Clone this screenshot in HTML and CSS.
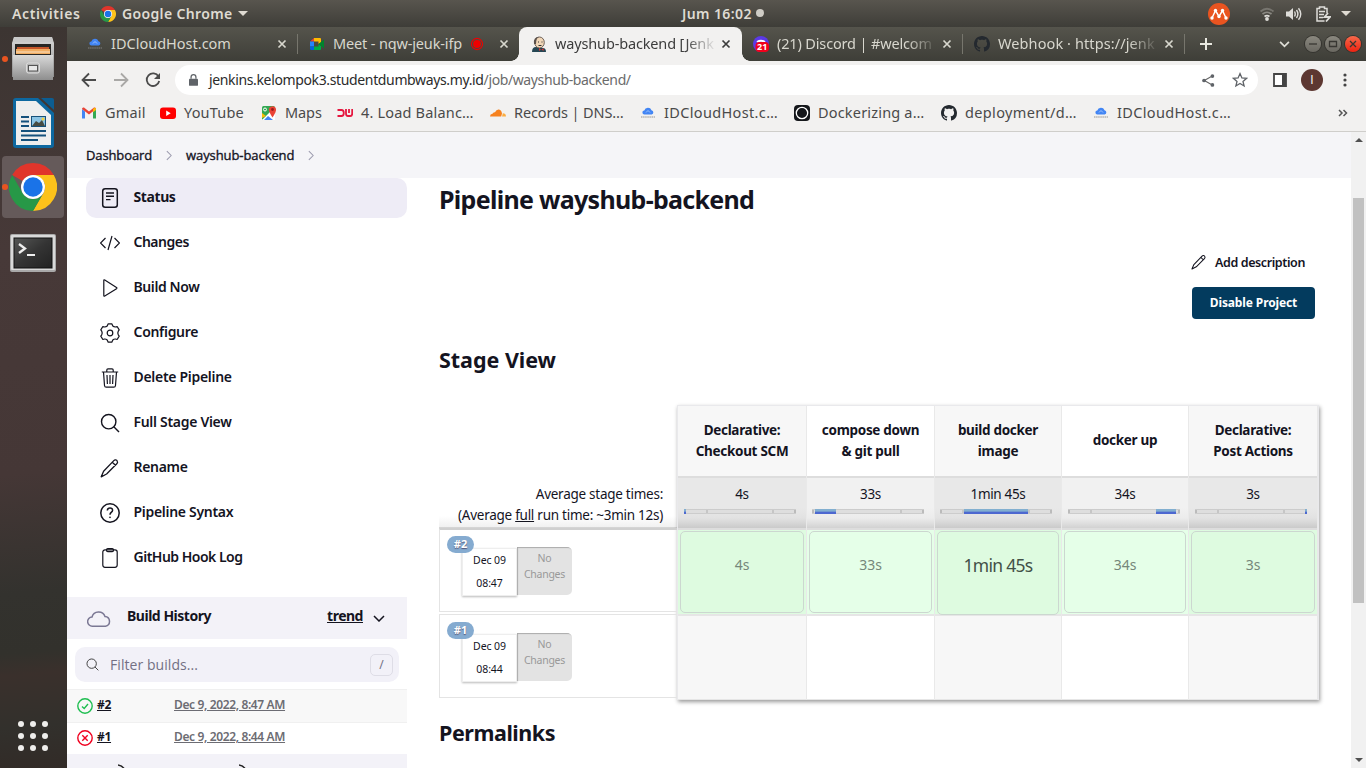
FILE: index.html
```html
<!DOCTYPE html>
<html lang="en">
<head>
<meta charset="utf-8">
<title>wayshub-backend [Jenkins]</title>
<link rel="stylesheet" href="styles.css">
</head>
<body>
<svg width="0" height="0" class="defs" aria-hidden="true">
  <symbol id="chrome" viewBox="0 0 48 48">
    <path fill="#e0352b" d="M24 0A24 24 0 0 1 44.8 12H24A12 12 0 0 0 13.6 18L3.2 12A24 24 0 0 1 24 0z"/>
    <path fill="#fcc21b" d="M44.8 12A24 24 0 0 1 24 48L34.4 30A12 12 0 0 0 34.4 18L24 12z"/>
    <path fill="#279847" d="M3.2 12A24 24 0 0 0 24 48L34.4 30A12 12 0 0 1 13.6 30z"/>
    <circle cx="24" cy="24" r="12" fill="#fff"/><circle cx="24" cy="24" r="9.7" fill="#1a73e8"/>
  </symbol>
  <symbol id="x" viewBox="0 0 10 10"><path d="M1.5 1.5l7 7M8.5 1.5l-7 7" stroke="currentColor" stroke-width="1.7" fill="none"/></symbol>
  <symbol id="github" viewBox="0 0 16 16"><path d="M8 0C3.58 0 0 3.58 0 8c0 3.54 2.29 6.53 5.47 7.59.4.07.55-.17.55-.38 0-.19-.01-.82-.01-1.49-2.01.37-2.53-.49-2.69-.94-.09-.23-.48-.94-.82-1.13-.28-.15-.68-.52-.01-.53.63-.01 1.08.58 1.23.82.72 1.21 1.87.87 2.33.66.07-.52.28-.87.51-1.07-1.78-.2-3.64-.89-3.64-3.95 0-.87.31-1.59.82-2.15-.08-.2-.36-1.02.08-2.12 0 0 .67-.21 2.2.82.64-.18 1.32-.27 2-.27s1.36.09 2 .27c1.53-1.04 2.2-.82 2.2-.82.44 1.1.16 1.92.08 2.12.51.56.82 1.27.82 2.15 0 3.07-1.87 3.75-3.65 3.95.29.25.54.73.54 1.48 0 1.07-.01 1.93-.01 2.2 0 .21.15.46.55.38A8 8 0 0 0 16 8c0-4.42-3.58-8-8-8z"/></symbol>
  <symbol id="idcloud" viewBox="0 0 16 16"><path fill="#4285f4" d="M4.5 9.5a2 2 0 0 1-.2-4 3.8 3.8 0 0 1 7.200-.3 2.200 2.200 0 0 1 .2 4.300z"/><path d="M6 7.500l2-2 2 2" stroke="#9fc3fb" fill="none"/><path d="M1 12h14" stroke="#888" stroke-width="1.600" stroke-dasharray="1.500 .6" opacity=".6"/></symbol>
  <symbol id="pencil" viewBox="0 0 20 20"><path d="M13.800 2.600a2.150 2.150 0 0 1 3.500.6c.5 1 .2 1.900-.5 2.600L6.600 16 1.200 18.800 3.600 13.200zM12.300 4.200l3.400 3.300" fill="none" stroke="currentColor" stroke-width="1.300" stroke-linejoin="round"/></symbol>
  <symbol id="search" viewBox="0 0 20 20"><circle cx="8.700" cy="8.700" r="7.200" fill="none" stroke="currentColor" stroke-width="1.400"/><path d="M13.800 13.800L19 19" stroke="currentColor" stroke-width="1.400"/></symbol>
</svg>

<header class="panel">
  <span class="activities">Activities</span>
  <svg class="panel-chrome"><use href="#chrome"/></svg>
  <span class="app-name">Google Chrome</span>
  <i class="caret"></i>
  <div class="clock">Jum 16:02<i class="dot"></i></div>
  <div class="tray">
    <svg width="22" height="22" viewBox="0 0 22 22"><circle cx="11" cy="11" r="11" fill="#e95420"/><path d="M4 15l3.500-7.500 3.500 6 3.500-6L18 15" fill="none" stroke="#fff" stroke-width="1.500"/><g fill="#fff"><circle cx="4" cy="15" r="1.700"/><circle cx="7.500" cy="7.500" r="1.700"/><circle cx="11" cy="13.500" r="1.700"/><circle cx="14.500" cy="7.500" r="1.700"/><circle cx="18" cy="15" r="1.700"/></g></svg>
    <svg class="wifi" width="16" height="14" viewBox="0 0 16 14" fill="none" stroke-width="1.700"><path d="M1.500 4.500Q8-1 14.500 4.500" stroke="#77756f"/><path d="M3.500 7q4.500-3.500 9 0" stroke="#8b8983"/><path d="M5.500 9.500q2.500-1.800 5 0" stroke="#deddd9"/><circle cx="8" cy="12" r="1.900" fill="#deddd9"/></svg>
    <svg class="volume" width="16" height="14" viewBox="0 0 16 14"><path d="M0 4.500h3L7 1v12L3 9.500H0z" fill="#deddd9"/><path d="M8.500 4.500q1.500 2.500 0 5M10.500 3q2.800 4 0 8M12.500 1.200q4.500 5.800 0 11.600" fill="none" stroke="#deddd9" stroke-width="1.400"/></svg>
    <svg class="battery" width="15" height="16" viewBox="0 0 15 16" fill="none" stroke="#deddd9" stroke-width="1.500"><path d="M8.500 15H1V2.500h2.500V1h5v1.500H11V7M3 5.500h6M3 8.500h5M3 11.500h4"/><path d="M12 7l-3.500 4H14l-4 4.500" stroke-width="1.800"/></svg>
    <i class="caret tray-caret"></i>
  </div>
</header>

<div class="desktop">
  <nav class="dock">
    <div class="launcher running">
      <svg width="42" height="44" viewBox="0 0 42 44"><defs><linearGradient id="g1" x2="0" y2="1"><stop stop-color="#d9d9d9"/><stop offset="1" stop-color="#8e8e8e"/></linearGradient></defs><path d="M2 0h38l2 6v34H0V6z" fill="url(#g1)"/><path d="M2 0h38l1 5H1z" fill="#c9c9c9"/><path d="M3 7h36v11H3z" fill="#282624"/><path d="M5 10h32v7H5z" fill="#c5562a"/><path d="M4 12h34v5H4z" fill="#f1ac61"/><path d="M4 15h34" stroke="#f7e0c5"/><path d="M1 18h40v25H1z" fill="url(#g1)"/><rect x="14.500" y="26" width="13" height="10" rx="2" fill="#b3b3b3" stroke="#ddd"/><rect x="16.500" y="28.500" width="9" height="5.500" fill="#e8e8e8" stroke="#555"/></svg>
    </div>
    <div class="launcher writer">
      <svg width="41" height="50" viewBox="0 0 41 50"><path d="M3 0h22l16 15v32q0 3-3 3H3q-3 0-3-3V3q0-3 3-3z" fill="#0d68a0"/><path d="M28 0h11q2 0 2 2v10z" fill="#0c5d91"/><path d="M3 3h20l15 14v30H3z" fill="#eee"/><path d="M8 19h8M8 23.500h8M8 28h8M8 33h25M8 37.500h25M8 42h17" stroke="#15517c" stroke-width="2"/><rect x="18.500" y="18.500" width="14" height="10" fill="#8bc4e4" stroke="#17517a"/><path d="M19 28l4-5 3 2 3-3 3 6z" fill="#474c43"/><circle cx="30" cy="21" r="1.500" fill="#f4d03f"/></svg>
    </div>
    <div class="launcher running active"><svg width="48" height="48"><use href="#chrome"/></svg></div>
    <div class="launcher">
      <svg width="46" height="38" viewBox="0 0 46 38"><defs><linearGradient id="g2" x2="1" y2="1"><stop stop-color="#565756"/><stop offset=".5" stop-color="#343434"/><stop offset="1" stop-color="#222"/></linearGradient></defs><rect width="46" height="38" rx="2" fill="#a9a9a9"/><rect x="1" y="1" width="44" height="35" rx="1" fill="#d9d9d9"/><rect x="4" y="4" width="38" height="30" fill="url(#g2)" stroke="#111"/><path d="M9 10l6 4.500L9 19" fill="none" stroke="#eee" stroke-width="2.300"/><path d="M17 21h8" stroke="#eee" stroke-width="2"/></svg>
    </div>
    <div class="apps"><i></i><i></i><i></i><i></i><i></i><i></i><i></i><i></i><i></i></div>
  </nav>

  <div class="browser">
    <div class="tabs">
      <div class="tab"><svg class="fav"><use href="#idcloud"/></svg><span class="label">IDCloudHost.com</span><svg class="close"><use href="#x"/></svg></div>
      <div class="tab no-sep"><svg class="fav" viewBox="0 0 16 16"><path d="M1 5.500L5 2v3.500z" fill="#ea4335"/><path d="M1 5.500h4v5H1z" fill="#2684fc"/><path d="M1 10.500h4V14H2.500Q1 14 1 12.500z" fill="#0066da"/><path d="M5 2h6q1 0 1 1v3.500L9.500 8V5.500H5z" fill="#ffba00"/><path d="M5 10.500h4.500V8l2.500 2v3q0 1-1 1H5z" fill="#00ac47"/><path d="M9.500 8L15 3.500v9z" fill="#00832d"/></svg><span class="label meet">Meet - nqw-jeuk-ifp</span><svg class="rec" viewBox="0 0 14 14"><circle cx="7" cy="7" r="3.900" fill="#e00"/><circle cx="7" cy="7" r="5.600" fill="none" stroke="#e00" stroke-width="1.100"/></svg><svg class="close"><use href="#x"/></svg></div>
      <div class="tab selected no-sep"><svg class="fav" viewBox="0 0 16 16"><path d="M1 16q0-5 4-5l7 1q3 0 3 4z" fill="#264653"/><ellipse cx="8.500" cy="6.500" rx="4.800" ry="5.500" fill="#f0d6b7" stroke="#4d4038" stroke-width=".8"/><path d="M3 8Q2 1 8 .8 5 2 5 8z" fill="#5b514b"/><path d="M7 6h1M10.500 6h1M7.500 9.500h3" stroke="#333"/><path d="M8 12l2 1.500L8 15zM12.500 12l-2 1.500 2 1.500z" fill="#d33833"/></svg><span class="label fade">wayshub-backend [Jenk</span><svg class="close"><use href="#x"/></svg></div>
      <div class="tab"><svg class="fav" viewBox="0 0 16 16"><circle cx="8" cy="8" r="8" fill="#5b39e6"/><path d="M4 6q4-2.500 8 0" stroke="#fff" stroke-width="2" fill="none"/><rect x="2.500" y="6" width="13.500" height="10" rx="4" fill="#f1001c"/><text x="9.200" y="14.200" class="fav-count">21</text></svg><span class="label fade">(21) Discord | #welcom</span><svg class="close"><use href="#x"/></svg></div>
      <div class="tab"><svg class="fav gh-dark"><use href="#github"/></svg><span class="label fade webhook">Webhook · https://jenk</span><svg class="close"><use href="#x"/></svg></div>
      <svg class="new-tab" viewBox="0 0 12 12"><path d="M6 0v12M0 6h12" stroke="#e8e8e0" stroke-width="2"/></svg>
      <div class="window-controls">
        <svg class="tab-search" viewBox="0 0 10 6"><path d="M1 .7l4 4 4-4" stroke="#deded6" stroke-width="1.600" fill="none"/></svg>
        <i class="wbtn"><svg viewBox="0 0 16 16"><path d="M4 8h8"/></svg></i>
        <i class="wbtn"><svg viewBox="0 0 16 16"><path d="M4.500 5.500h7v5h-7z"/></svg></i>
        <i class="wbtn red"><svg viewBox="0 0 16 16"><path d="M5 5l6 6M11 5l-6 6"/></svg></i>
      </div>
    </div>

    <div class="toolbar">
      <svg class="nav-icon" viewBox="0 0 16 16"><path d="M15 8H2M8 1.500L1.500 8 8 14.500"/></svg>
      <svg class="nav-icon off" viewBox="0 0 16 16"><path d="M1 8h13M8 1.500L14.500 8 8 14.500"/></svg>
      <svg class="nav-icon" viewBox="0 0 16 16"><path d="M13.500 4.500A6.300 6.300 0 1 0 14.200 9"/><path d="M15 1v6H9z" class="solid"/></svg>
      <div class="omnibox">
        <svg class="lock" viewBox="0 0 10 13"><rect y="5" width="10" height="8" rx="1" fill="#5f6368"/><path d="M2.300 5V3.300a2.700 2.700 0 0 1 5.400 0V5" fill="none" stroke="#5f6368" stroke-width="1.400"/></svg>
        <span class="url">jenkins.kelompok3.studentdumbways.my.id<span class="path">/job/wayshub-backend/</span></span>
        <svg class="share" viewBox="0 0 14 14"><path d="M11.500 2L2.500 7l9 5" fill="none" stroke="#666" stroke-width="1.200"/><g fill="#5f6368"><circle cx="11.200" cy="2.200" r="2"/><circle cx="2.200" cy="7" r="2"/><circle cx="11.200" cy="11.800" r="2"/></g></svg>
        <svg class="star" viewBox="0 0 16 16"><path d="M8 1.600l1.900 4.300 4.700.4L11 9.400l1.100 4.600L8 11.500 3.900 14 5 9.400 1.400 6.300l4.700-.4z" fill="none" stroke="#5f6368" stroke-width="1.300"/></svg>
      </div>
      <svg class="side-icon" viewBox="0 0 14 14"><path d="M1 1h12v12H1z" fill="#fff" stroke="#444" stroke-width="1.800"/><path d="M9 1h4v12H9z" fill="#444"/></svg>
      <span class="avatar">I</span>
      <svg class="menu-dots" viewBox="0 0 4 14" fill="#444"><circle cx="2" cy="2" r="1.600"/><circle cx="2" cy="7" r="1.600"/><circle cx="2" cy="12" r="1.600"/></svg>
    </div>

    <div class="bookmarks">
      <div class="bm"><svg viewBox="0 0 16 16"><path d="M1 13.500V4l3 2.500v7z" fill="#4285f4"/><path d="M12 13.500v-7L15 4v9.500z" fill="#34a853"/><path d="M1 4q0-2 2-1.500L8 6.500l5-4q2-.5 2 1.500l-7 5.500z" fill="#ea4335"/><path d="M12 4l2-1.500Q15 3 15 5l-3 2.200z" fill="#fbbc04"/></svg><span>Gmail</span></div>
      <div class="bm"><svg viewBox="0 0 16 16"><rect y="2.500" width="16" height="11.500" rx="3" fill="#f00"/><path d="M6.200 5.500v5.500l4.500-2.700z" fill="#fff"/></svg><span>YouTube</span></div>
      <div class="bm"><svg viewBox="0 0 16 16"><rect x="1" y="1" width="13" height="14" rx="1.500" fill="#34a853"/><path d="M1 15l11-11 2 2v9z" fill="#fff"/><path d="M3 15l4-4 5 4z" fill="#4285f4"/><path d="M1 13V8l4 3z" fill="#fbbc04"/><path d="M11.500 12.500Q7.500 6.500 8 4a3.600 3.600 0 0 1 7 0q.5 2.500-3.500 8.500z" fill="#ea4335"/><circle cx="11.500" cy="4.500" r="1.400" fill="#9b1c1c"/><circle cx="4" cy="4.500" r="1.500" fill="none" stroke="#fff"/></svg><span class="tight">Maps</span></div>
      <div class="bm"><svg viewBox="0 0 16 16"><path d="M.5 5h4q2.300 0 2.300 3t-2.300 3h-4M9 4v4.500Q9 11 11 11h2.200q2 0 2-2.500V4M12 4v4" fill="none" stroke="#e5173f" stroke-width="1.800"/></svg><span>4. Load Balanc…</span></div>
      <div class="bm"><svg viewBox="0 0 16 16"><path d="M0 11.500q0-2.500 2.500-2.700Q3 7 5 7.200 6.500 4 9 4.500q2.500.5 3 4l-.8 3z" fill="#f6821f"/><path d="M12 11.500l.8-3.300q3 0 3.200 3.300z" fill="#fbad41"/></svg><span class="tight">Records | DNS…</span></div>
      <div class="bm"><svg><use href="#idcloud"/></svg><span class="wide">IDCloudHost.c…</span></div>
      <div class="bm"><svg viewBox="0 0 16 16"><rect width="16" height="16" rx="4" fill="#15171b"/><circle cx="8" cy="8" r="5.700" fill="none" stroke="#fff" stroke-width="1.300"/></svg><span>Dockerizing a…</span></div>
      <div class="bm"><svg fill="#24292f"><use href="#github"/></svg><span class="wide">deployment/d…</span></div>
      <div class="bm"><svg><use href="#idcloud"/></svg><span class="wide">IDCloudHost.c…</span></div>
      <svg class="more" viewBox="0 0 10 8"><path d="M1 1l3 3-3 3M5.500 1l3 3-3 3" fill="none" stroke="#555" stroke-width="1.500"/></svg>
    </div>

    <div class="viewport">
      <div class="page">
        <div class="breadcrumbs">
          <span class="crumb">Dashboard</span><svg viewBox="0 0 7 12"><path d="M1 1l5 5-5 5"/></svg>
          <span class="crumb job">wayshub-backend</span><svg viewBox="0 0 7 12"><path d="M1 1l5 5-5 5"/></svg>
        </div>
        <div class="columns">
          <aside class="side">
            <div class="tasks">
              <div class="task current"><svg viewBox="0 0 20 20"><rect x="2.700" y=".8" width="14.600" height="18.400" rx="2.500" stroke-width="1.500"/><path d="M6 5h8M6 8.300h8M6 11.600h4.500" stroke-width="1.400"/></svg><span>Status</span></div>
              <div class="task t-changes"><svg viewBox="0 0 20 20"><path d="M5.500 5L.5 10l5 5M14.500 5l5 5-5 5M12 3L8 17"/></svg><span>Changes</span></div>
              <div class="task t-build"><svg viewBox="0 0 20 20"><path d="M3.800 2.500v15q0 1 1 .5L16.500 10.700q.9-.7 0-1.300L4.800 2q-1-.5-1 .5z"/></svg><span>Build Now</span></div>
              <div class="task"><svg viewBox="0 0 20 20"><path d="M8.200.8h3.600l1 2.200q1.400 1.300 3.200.9l1.300-.2 1.900 3.200-.9 1.200q-1 1.900 0 3.800l.9 1.200-1.900 3.200-1.300-.2q-1.800-.4-3.200.9l-1 2.200H8.200l-1-2.200q-1.400-1.300-3.200-.9l-1.300.2-1.900-3.200.9-1.200q1-1.900 0-3.800L.8 6.900l1.900-3.200 1.300.2q1.800.4 3.200-.9z" stroke-linejoin="round"/><circle cx="10" cy="10" r="2.800"/></svg><span>Configure</span></div>
              <div class="task"><svg viewBox="0 0 20 20"><path d="M1.800 4h16.400M3.500 4l1 13.500q.2 1.700 1.800 1.700h7.400q1.600 0 1.800-1.700l1-13.500M6.800 4V2q0-1.200 1.200-1.200h4q1.200 0 1.200 1.200v2M7 7l.4 9M10 7v9M13 7l-.4 9"/></svg><span>Delete Pipeline</span></div>
              <div class="task"><svg><use href="#search"/></svg><span>Full Stage View</span></div>
              <div class="task"><svg><use href="#pencil"/></svg><span>Rename</span></div>
              <div class="task"><svg viewBox="0 0 20 20"><circle cx="10" cy="10" r="9.200" stroke-width="1.500"/><path d="M7.300 7.500q.2-2.400 2.700-2.400t2.600 2.200q0 1.300-1.500 2.200-1.100.7-1.100 2.200" stroke-width="1.500"/><circle cx="10" cy="14.300" r=".5" stroke-width="1"/></svg><span>Pipeline Syntax</span></div>
              <div class="task t-hook"><svg viewBox="0 0 20 20"><rect x="2.800" y="1.800" width="14.400" height="17.500" rx="2.200"/><rect x="6.500" y=".6" width="7" height="3" rx="1.300"/></svg><span>GitHub Hook Log</span></div>
            </div>
            <div class="history-head">
              <svg class="cloud" viewBox="0 0 24 17"><path d="M5.500 16.200A4.600 4.600 0 0 1 5 7 6.800 6.800 0 0 1 18 6.500a4.900 4.900 0 0 1 .5 9.700z"/></svg>
              <span class="history-title">Build History</span>
              <span class="trend">trend</span>
              <svg class="chev" viewBox="0 0 12 7"><path d="M1 1l5 5 5-5"/></svg>
            </div>
            <div class="filter"><svg><use href="#search"/></svg><span>Filter builds...</span><kbd>/</kbd></div>
            <div class="build odd"><svg class="ok" viewBox="0 0 16 16"><circle cx="8" cy="8" r="7.200"/><path d="M5 8.400l2.200 2L11 6"/></svg><b class="num">#2</b><b class="when">Dec 9, 2022, 8:47 AM</b></div>
            <div class="build"><svg class="fail" viewBox="0 0 16 16"><circle cx="8" cy="8" r="7.200"/><path d="M5.300 5.300l5.400 5.400M10.700 5.300l-5.400 5.400"/></svg><b class="num">#1</b><b class="when">Dec 9, 2022, 8:44 AM</b></div>
            <div class="feeds">
              <svg viewBox="0 0 10 12"><path d="M0 1q5 1 7 5"/></svg><svg viewBox="0 0 10 12"><path d="M0 1q5 1 7 5"/></svg>
            </div>
          </aside>

          <main class="main">
            <h1>Pipeline wayshub-backend</h1>
            <div class="actions">
              <div class="add-desc"><svg><use href="#pencil"/></svg><span>Add description</span></div>
              <button class="disable">Disable Project</button>
            </div>
            <h2 class="stage-title">Stage View</h2>
            <div class="stage">
              <div class="run-info">
                <div class="avg-label"><div>Average stage times:</div><div>(Average <u>full</u> run time: ~3min 12s)</div></div>
                <div class="run"><span class="badge">#2</span><div class="when-box">Dec 09<br>08:47</div><div class="nochange">No<br>Changes</div></div>
                <div class="run"><span class="badge">#1</span><div class="when-box">Dec 09<br>08:44</div><div class="nochange">No<br>Changes</div></div>
              </div>
              <div class="stages">
                <section class="col shade"><div class="head">Declarative:<br>Checkout SCM</div><div class="avg">4s<div class="bar"><i style="left:0;width:2px"></i></div></div><div class="cell ok-cell"><span>4s</span></div><div class="cell"></div></section>
                <section class="col"><div class="head">compose down<br>&amp; git pull</div><div class="avg">33s<div class="bar"><i style="left:3px;width:21px"></i></div></div><div class="cell ok-cell"><span>33s</span></div><div class="cell"></div></section>
                <section class="col shade"><div class="head">build docker<br>image</div><div class="avg">1min 45s<div class="bar"><i style="left:24px;width:64px"></i></div></div><div class="cell ok-cell long"><span>1min 45s</span></div><div class="cell"></div></section>
                <section class="col"><div class="head">docker up</div><div class="avg">34s<div class="bar"><i style="left:88px;width:20px"></i></div></div><div class="cell ok-cell"><span>34s</span></div><div class="cell"></div></section>
                <section class="col shade"><div class="head">Declarative:<br>Post Actions</div><div class="avg">3s<div class="bar"><i style="left:110px;width:2px"></i></div></div><div class="cell ok-cell"><span>3s</span></div><div class="cell"></div></section>
              </div>
            </div>
            <h2 class="permalinks">Permalinks</h2>
          </main>
        </div>
      </div>
      <div class="scrollbar"><i class="up"></i><i class="thumb"></i><i class="down"></i></div>
    </div>
  </div>
</div>
</body>
</html>
```
FILE: styles.css
```css
* { box-sizing: border-box; }
body { margin: 0; width: 1366px; height: 768px; overflow: hidden; display: flex; flex-direction: column; font-family: "Noto Sans", sans-serif; color: #14141f; }
svg { display: block; flex: none; }
.defs { position: absolute; }

/* desktop panel */
.panel { height: 27px; flex: none; display: flex; align-items: center; background: linear-gradient(#58554e, #3e3d38); color: #dfdbd2; font-size: 14px; font-weight: 600; padding-left: 12px; position: relative; }
.activities { width: 88px; letter-spacing: .6px; }
.panel-chrome { width: 16px; height: 16px; margin-right: 6px; }
.app-name { letter-spacing: .35px; width: 116px; }
.caret { border: 5px solid transparent; border-top-color: #dfdbd2; border-bottom: 0; }
.panel > span, .clock { padding-bottom: 1px; }
.clock { position: absolute; left: 682px; display: flex; align-items: center; letter-spacing: .4px; }
.dot { width: 8px; height: 8px; border-radius: 50%; background: #cfccc5; margin-left: 4px; }
.tray { margin-left: auto; width: 158px; display: flex; align-items: center; }
.wifi { margin-left: 29px; }
.volume { margin-left: 11px; }
.battery { margin-left: 14px; }
.tray-caret { margin-left: 10px; }

.desktop { flex: 1; display: flex; min-height: 0; }
.dock { width: 67px; flex: none; display: flex; flex-direction: column; align-items: center; background: linear-gradient(175deg, #3c3532 0, #473938 30%, #453736 60%, #33322e 76%, #32312c 84%, #3a302c 87%, #32302c 94%, #322b27 100%); }
.launcher { width: 62px; height: 61px; margin: 4px 1px 0 0; border-radius: 4px; display: flex; align-items: center; justify-content: center; position: relative; }
.launcher:first-child { margin-top: 1px; height: 62px; }
.launcher.writer { padding-bottom: 3px; }
.launcher.active { background: #655a5a; height: 62px; margin-top: 1px; }
.launcher.running::before { content: ""; position: absolute; left: 0; width: 6px; height: 6px; border-radius: 50%; background: #e95420; }
.apps { margin: auto 1px 17px 0; display: grid; grid-template-columns: repeat(3, 6px); gap: 6px; }
.apps i { width: 6px; height: 6px; border-radius: 50%; background: #efeeec; }

.browser { flex: 1; display: flex; flex-direction: column; min-width: 0; }

/* tabs */
.tabs { height: 34px; flex: none; display: flex; padding-left: 8px; background: linear-gradient(#55544c, #3e3e38); }
.tab { width: 222px; height: 34px; display: flex; align-items: center; padding: 0 9px 0 12px; position: relative; color: #d8d7ce; font-size: 14.5px; }
.tab:nth-child(4) { width: 221px; }
.tab:not(.no-sep)::after { content: ""; position: absolute; right: -1px; top: 7px; width: 1px; height: 20px; background: #77766d; }
.tab.selected { background: #f2f1f0; color: #3c3c3c; border-radius: 8px 8px 0 0; width: 223px; margin-right: -1px; padding-right: 10px; }
.tab.selected::before, .tab.selected::after { content: ""; position: absolute; bottom: 0; width: 8px; height: 8px; }
.tab.selected::before { left: -8px; background: radial-gradient(circle at 0 0, transparent 7.5px, #f2f1f0 8px); }
.tab.selected::after { right: -8px; background: radial-gradient(circle at 100% 0, transparent 7.5px, #f2f1f0 8px); }
.fav { width: 16px; height: 16px; margin-right: 8px; }
.fav-count { font: 700 9px "Noto Sans", sans-serif; fill: #fff; text-anchor: middle; }
.gh-dark { fill: #24292f; }
.label { flex: 1; white-space: nowrap; padding-bottom: 2px; min-width: 0; }
.label.meet { letter-spacing: -.15px; }
.label.fade { letter-spacing: -.15px; mask-image: linear-gradient(90deg, #000 79%, transparent 98%); }
.label.webhook { letter-spacing: .1px; }
.rec { width: 14px; height: 14px; margin-right: 14px; }
.close { width: 10px; height: 10px; margin: 0 1px; }
.new-tab { width: 12px; height: 12px; margin: 11px 0 0 16px; }
.window-controls { margin-left: auto; display: flex; align-items: center; padding-right: 5px; gap: 4px; }
.tab-search { width: 11px; height: 7px; margin-right: 11px; }
.wbtn { width: 16px; height: 16px; border-radius: 50%; background: linear-gradient(#8a887f, #6a6861); box-shadow: 0 0 0 1px #35342f; }
.wbtn svg { fill: none; stroke: #383732; stroke-width: 1.3; }
.wbtn.red { background: linear-gradient(#f7694a, #e21); }

/* toolbar */
.toolbar { height: 38px; flex: none; display: flex; align-items: center; background: #f2f1f0; padding-left: 14px; }
.nav-icon { width: 16px; height: 16px; margin-right: 16px; fill: none; stroke: #4b4b4b; stroke-width: 1.8; }
.nav-icon.off { stroke: #a9a8a6; }
.nav-icon .solid { fill: #4b4b4b; stroke: none; }
.omnibox { width: 1083px; height: 30px; margin-left: -2px; border-radius: 15px; background: #fff; display: flex; align-items: center; padding: 0 10px 0 14px; }
.lock { width: 9px; height: 12px; margin-right: 11px; }
.url { flex: 1; font-size: 14px; letter-spacing: -.36px; color: #2b2b2b; white-space: nowrap; padding-bottom: 2px; }
.path { color: #6b6b6b; letter-spacing: -.39px; }
.share { width: 13px; height: 13px; margin-right: 17px; }
.star { width: 16px; height: 16px; }
.side-icon { width: 14px; height: 14px; margin-left: 15px; }
.avatar { width: 22px; height: 22px; margin-left: 14px; border-radius: 50%; background: #5d3731; color: #fff; font: 12px/22px "Open Sans", sans-serif; text-align: center; }
.menu-dots { width: 4px; height: 14px; margin-left: 20px; }

.bookmarks { height: 33px; flex: none; display: grid; grid-template-columns: 79px 101px 76px 153px 150px 154px 147px 152px 1fr 23px; align-items: center; padding: 0 0 5px 14px; background: #f2f1f0; border-bottom: 1px solid #cfcecb; font-size: 14.5px; color: #4a4a4a; }
.bm { display: flex; gap: 8px; align-items: center; white-space: nowrap; }
.bm svg { width: 16px; height: 16px; }
.bm span { padding-bottom: 2px; letter-spacing: .18px; }
.bm .wide { letter-spacing: .35px; }
.bm .tight { letter-spacing: -.1px; }
.more { width: 10px; height: 8px; margin-left: -5px; }

/* page */
.viewport { flex: 1; display: flex; min-height: 0; background: #fff; }
.page { flex: 1; min-width: 0; overflow: hidden; }
.breadcrumbs { height: 46px; background: #f5f5f8; display: flex; align-items: center; padding-left: 19px; font: 500 13px "Open Sans", sans-serif; }
.breadcrumbs svg { width: 6px; height: 11px; fill: none; stroke: #9b9aae; stroke-width: 1.2; margin: 0 14px; }
.crumb { letter-spacing: -.12px; -webkit-text-stroke: .35px; }
.crumb.job { letter-spacing: -.08px; }
.columns { display: flex; }
.side { width: 340px; flex: none; }
.tasks { padding-left: 19px; height: 419px; }
.task { height: 40px; margin-bottom: 5px; border-radius: 10px; display: flex; align-items: center; padding-left: 14px; gap: 13.5px; font-size: 14px; font-weight: 600; letter-spacing: -.3px; }
.task svg { width: 20px; height: 20px; fill: none; stroke: #14141f; stroke-width: 1.2; }
.task span { padding-bottom: 4px; }
.current { background: #eeecf6; font-weight: 700; letter-spacing: -.4px; }
.t-changes { letter-spacing: -.5px; }
.t-build { letter-spacing: -.4px; }
.t-hook { letter-spacing: -.5px; }
.t-hook span { padding-bottom: 3px; }
.history-head { height: 42px; background: #f3f2f8; display: flex; align-items: center; padding: 0 22px 3px 20px; font-size: 14px; font-weight: 700; letter-spacing: -.48px; }
.history-head span { padding-bottom: 2px; }
.cloud { width: 24px; height: 17px; fill: none; stroke: #7b7894; stroke-width: 1.5; margin: 4px 16px 0 0; }
.trend { margin-left: auto; text-decoration: underline; }
.chev { width: 12px; height: 7px; fill: none; stroke: #14141f; stroke-width: 1.5; margin: 4px 0 0 10px; }
.filter { margin: 8px 8px 7px; height: 35px; border-radius: 10px; background: #f2f1f8; display: flex; align-items: center; padding: 0 6px 0 11px; font: 500 14px "Open Sans", sans-serif; color: #737084; letter-spacing: .06px; }
.filter svg { width: 13px; height: 13px; margin-right: 11px; color: #333; stroke-width: 2; }
.filter kbd { margin-left: auto; width: 23px; height: 22px; border: 1px solid #dedde6; border-radius: 5px; font: 12px/20px "Noto Sans", sans-serif; text-align: center; }
.build { height: 32px; border-top: 1px solid #f0f0f0; display: flex; align-items: center; padding: 0 0 1px 10px; font-size: 12px; }
.build.odd { height: 33px; background: #f8f8f8; }
.build svg { width: 16px; height: 16px; fill: none; stroke-width: 1.4; margin-right: 4px; }
.build b { text-decoration: underline; padding-bottom: 3px; }
.ok { stroke: #1ebe50; }
.fail { stroke: #f0001f; }
.num { width: 77px; letter-spacing: -.3px; }
.when { color: #6c6c73; letter-spacing: -.37px; font-weight: 600; }
.feeds { height: 30px; background: #f3f2f8; display: flex; padding: 10px 0 0 51px; gap: 111px; }
.feeds svg { width: 10px; height: 12px; fill: none; stroke: #222; stroke-width: 1.5; }

/* main column */
.main { margin-left: 32px; width: 880px; flex: none; }
h1 { margin: 0; padding: 3px 0 1px; font-size: 25px; line-height: 36px; letter-spacing: -.7px; }
h2 { margin: 0; font-size: 21.5px; line-height: 30px; }
.actions { display: flex; flex-direction: column; align-items: flex-start; margin: 34px 0 0 752px; }
.add-desc { display: flex; align-items: center; gap: 8px; height: 20px; font-size: 12.5px; font-weight: 600; letter-spacing: -.4px; white-space: nowrap; }
.add-desc svg { width: 16px; height: 16px; }
.disable { margin: 15px 0 0 1px; width: 123px; height: 32px; border: 0; border-radius: 4px; background: #033b5e; color: #fff; font: 700 12px "Noto Sans", sans-serif; letter-spacing: -.12px; padding: 0 0 2px; }
.stage-title { margin-top: 26px; letter-spacing: -.03px; }
.stage { display: flex; margin-top: 30px; height: 294px; }
.run-info { width: 238px; padding-top: 71px; }
.avg-label { height: 52px; padding: 8px 14px 0 0; text-align: right; font-size: 13.5px; line-height: 21px; letter-spacing: -.26px; background: linear-gradient(transparent 78%, #f1f1f1); border-bottom: 1px solid #d5d5d5; white-space: nowrap; }
.run { height: 84px; border: 1px solid #e4e4e4; border-right: 0; display: flex; padding: 18px 0 0 22px; position: relative; font-size: 10.5px; }
.run:nth-child(2) { border-top: 2px solid #d0d0d0; margin-bottom: 2px; padding-top: 17px; }
.badge { position: absolute; left: 7px; top: 7px; width: 27px; height: 17px; border-radius: 9px; background: #85abd0; color: #fff; font-size: 11px; font-weight: 700; line-height: 16px; text-align: center; text-shadow: 0 1px 1px #557; z-index: 1; }
.run:nth-child(2) .badge { top: 6px; }
.when-box { margin-top: 1px; width: 55px; height: 48px; border: 1px solid #eee; box-shadow: 0 1px 2px #bbb; text-align: center; line-height: 23px; letter-spacing: -.1px; }
.nochange { width: 55px; height: 48px; border-radius: 0 5px 5px 0; background: #e3e3e3; box-shadow: inset 1px 1px 1px #aaa; color: #999; text-align: center; line-height: 16px; padding-top: 3px; letter-spacing: -.25px; }
.stages { display: grid; grid-template-columns: 129px 128px 127px 127px 129px; border: 1px solid #e9e9ec; box-shadow: 1px 2px 4px rgba(0,0,0,.4); width: 642px; height: 295px; flex: none; }
.col { border-right: 1px solid #e9e9e9; }
.head { height: 72px; padding-bottom: 1px; display: flex; align-items: center; justify-content: center; text-align: center; font-size: 13.5px; font-weight: 700; line-height: 21px; letter-spacing: -.3px; border-bottom: 2px solid #ddd; }
.avg { height: 52px; padding-top: 6px; text-align: center; font-size: 13.5px; line-height: 21px; letter-spacing: -.35px; background: linear-gradient(#f1f1f1 60%, #ececec 80%, #d2d2d2); border-bottom: 2px solid #ddd; }
.shade .avg { background: linear-gradient(#e8e8e8 60%, #e2e2e2 80%, #cacaca); }
.shade { background: #f7f7f7; }
.bar { width: 112px; height: 5px; margin: 4px 0 0 6px; background: linear-gradient(90deg, #bbb 2px, transparent 2px 22px, #c6c6c6 22px 24px, transparent 24px 88px, #c6c6c6 88px 90px, transparent 90px 110px, #bbb 110px), #dedede; border: solid #ccc; border-width: 1px 0; position: relative; }
.col:nth-child(2) .bar, .col:nth-child(3) .bar { margin-left: 5px; }
.bar i { position: absolute; top: -1px; height: 5px; background: linear-gradient(#82afd0 45%, #4d68d0 60%); }
.cell { height: 84px; border-bottom: 1px solid #e6e6e6; }
.ok-cell { height: 86px; border-bottom: 2px solid #e6e6e6; padding: 1px 2px 2px; background: #e5ffe8; }
.ok-cell span { display: block; height: 82px; border: 1px solid #ccd7d0; border-radius: 5px; text-align: center; font-size: 14px; line-height: 66px; color: #75877a; }
.shade .ok-cell { background: #defbe0; }
.long span { font-size: 17.5px; line-height: 67px; letter-spacing: -.7px; color: #435047; height: 84px; }
.permalinks { margin-top: 19px; letter-spacing: -.45px; }

.scrollbar { width: 15px; flex: none; background: #f1f1f1; position: relative; }
.up, .down { position: absolute; left: 4px; border: 4px solid transparent; }
.up { top: 6px; border-top: 0; border-bottom-color: #505050; }
.down { bottom: 6px; border-bottom: 0; border-top-color: #505050; }
.thumb { position: absolute; left: 2px; top: 66px; width: 11px; height: 405px; background: #c1c1c1; }
```
